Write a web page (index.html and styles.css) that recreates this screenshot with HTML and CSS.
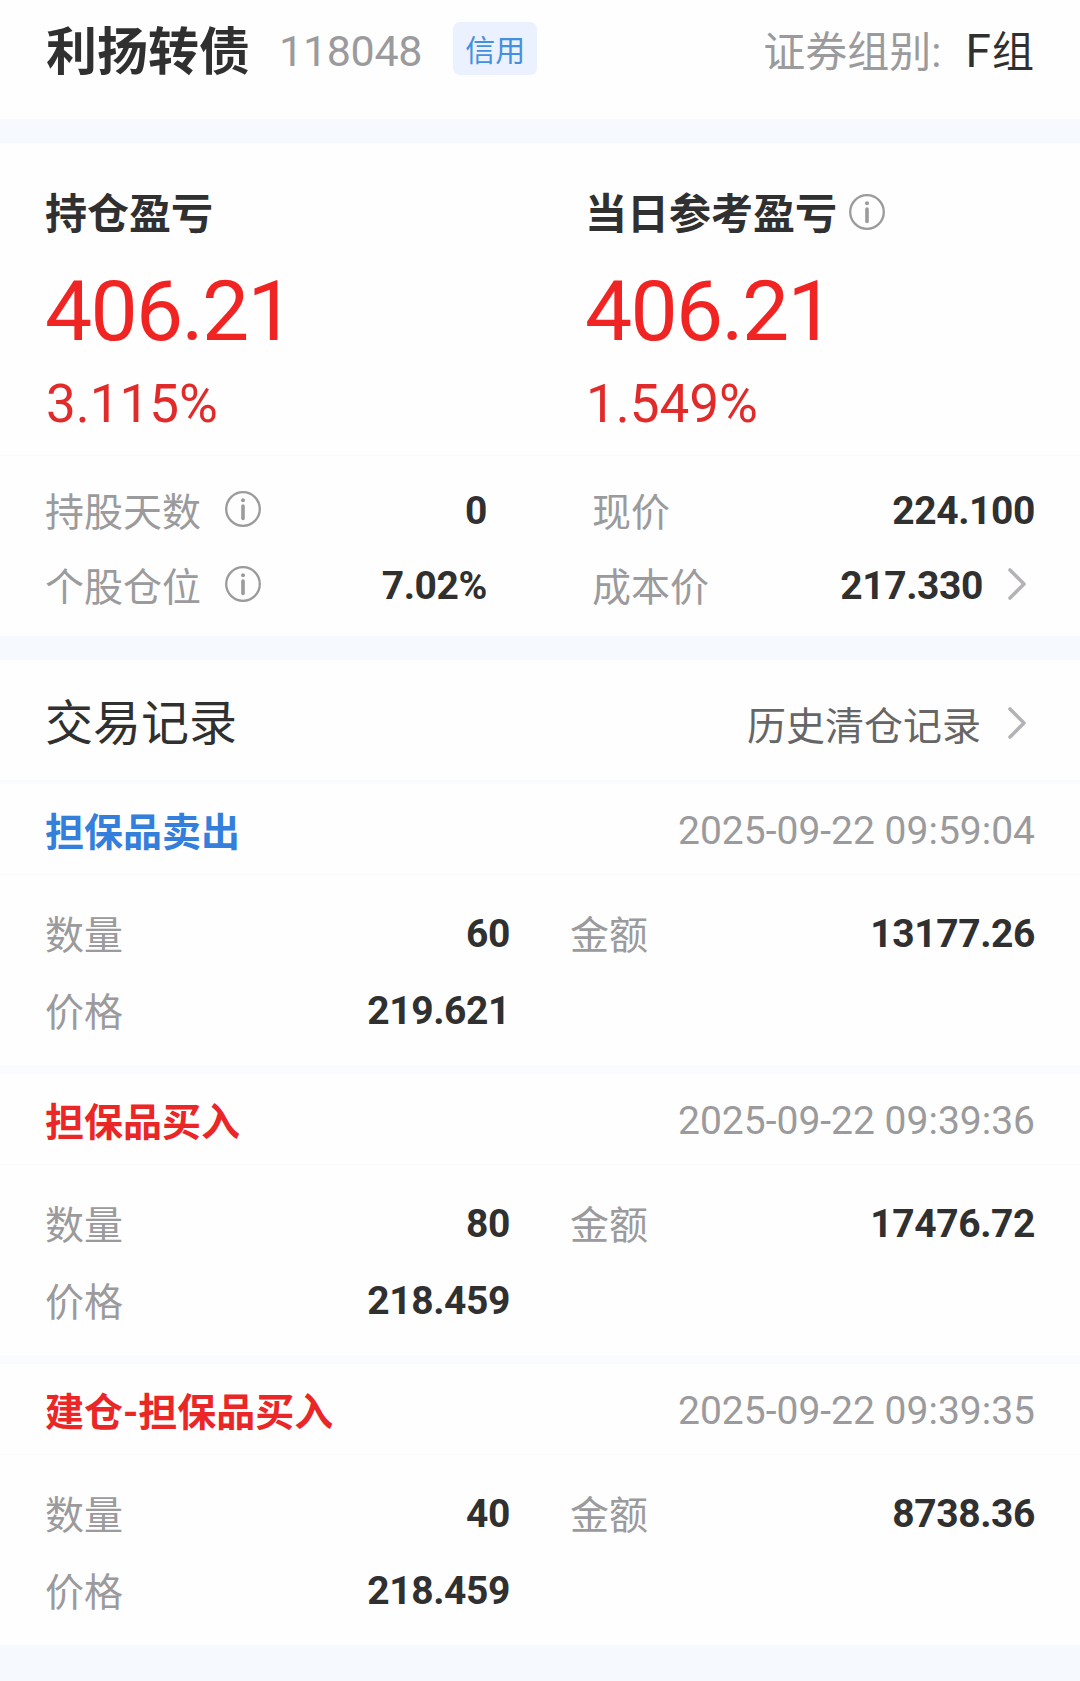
FILE: index.html
```html
<!DOCTYPE html>
<html lang="zh-CN">
<head>
<meta charset="utf-8">
<title>利扬转债 118048</title>
<link rel="stylesheet" href="styles.css">
</head>
<body>
<svg class="sprite" aria-hidden="true">
  <symbol id="info" viewBox="0 0 36 36">
    <circle cx="18" cy="18" r="16.8" fill="none" stroke="currentColor" stroke-width="2.3"/>
    <circle cx="18" cy="9.2" r="2" fill="currentColor"/>
    <path d="M18 15v12.5" fill="none" stroke="currentColor" stroke-width="3.6" stroke-linecap="round"/>
  </symbol>
  <symbol id="chevron" viewBox="0 0 18 32">
    <path d="M2 2l14 14L2 30" fill="none" stroke="currentColor" stroke-width="3.6" stroke-linecap="round" stroke-linejoin="round"/>
  </symbol>
</svg>

<header class="header">
  <h1 class="name">利扬转债</h1>
  <span class="code">118048</span>
  <span class="badge">信用</span>
  <span class="group-label">证券组别:</span>
  <span class="group"><span class="group-letter">F</span>组</span>
</header>

<section class="profit">
  <div class="profit-col">
    <h2 class="profit-title"><span class="profit-name">持仓盈亏</span></h2>
    <div class="amount">406.21</div>
    <div class="percent">3.115%</div>
  </div>
  <div class="profit-col">
    <h2 class="profit-title"><span class="profit-name">当日参考盈亏</span><svg class="info"><use href="#info"/></svg></h2>
    <div class="amount">406.21</div>
    <div class="percent">1.549%</div>
  </div>
</section>

<section class="stats">
  <div class="stat-col">
    <div class="row"><span class="label">持股天数</span><svg class="info"><use href="#info"/></svg><span class="value">0</span></div>
    <div class="row"><span class="label">个股仓位</span><svg class="info"><use href="#info"/></svg><span class="value">7.02%</span></div>
  </div>
  <div class="stat-col">
    <div class="row"><span class="label">现价</span><span class="value">224.100</span></div>
    <div class="row"><span class="label">成本价</span><span class="value">217.330</span><svg class="chevron"><use href="#chevron"/></svg></div>
  </div>
</section>

<main class="records">
  <div class="records-head">
    <h2 class="records-title">交易记录</h2>
    <a class="history">历史清仓记录</a>
    <svg class="chevron"><use href="#chevron"/></svg>
  </div>

  <article class="record">
    <div class="record-head"><h3 class="action sell">担保品卖出</h3><time class="time">2025-09-22 09:59:04</time></div>
    <div class="record-body">
      <div class="row"><span class="label">数量</span><span class="value">60</span></div>
      <div class="row"><span class="label">金额</span><span class="value">13177.26</span></div>
      <div class="row"><span class="label">价格</span><span class="value">219.621</span></div>
    </div>
  </article>

  <article class="record">
    <div class="record-head"><h3 class="action buy">担保品买入</h3><time class="time">2025-09-22 09:39:36</time></div>
    <div class="record-body">
      <div class="row"><span class="label">数量</span><span class="value">80</span></div>
      <div class="row"><span class="label">金额</span><span class="value">17476.72</span></div>
      <div class="row"><span class="label">价格</span><span class="value">218.459</span></div>
    </div>
  </article>

  <article class="record">
    <div class="record-head"><h3 class="action buy">建仓-担保品买入</h3><time class="time">2025-09-22 09:39:35</time></div>
    <div class="record-body">
      <div class="row"><span class="label">数量</span><span class="value">40</span></div>
      <div class="row"><span class="label">金额</span><span class="value">8738.36</span></div>
      <div class="row"><span class="label">价格</span><span class="value">218.459</span></div>
    </div>
  </article>
</main>
</body>
</html>
```
FILE: styles.css
```css
* {
  box-sizing: border-box;
}

body {
  margin: 0;
  min-height: 1681px;
  background: #f6faff;
  color: #303030;
  font-family: Roboto, "Noto Sans CJK SC", sans-serif;
  font-size: 39px;
  line-height: 1.2;
  white-space: nowrap;
}

h1, h2, h3 {
  margin: 0;
}

.sprite {
  display: none;
}

.info {
  flex: none;
  width: 36px;
  height: 36px;
  color: #9b9a9c;
}

.chevron {
  flex: none;
  width: 18px;
  height: 32px;
  margin: 0 9px 6px 25px;
  color: #b4b2b6;
}

/* Header */
.header {
  display: flex;
  align-items: center;
  height: 119px;
  padding: 0 46px 15px;
  background: #fefefe;
  font-size: 42px;
}

.name {
  padding-top: 2px;
  font-size: 51px;
  font-weight: 700;
}

.code {
  margin-left: 29px;
  color: #9b9a9c;
  font-size: 43px;
  letter-spacing: -0.3px;
}

.badge {
  width: 84px;
  height: 53px;
  margin: -7px 0 0 31px;
  border-radius: 7px;
  background: #ebf1fe;
  color: #4490e0;
  font-size: 30px;
  line-height: 57px;
  text-align: center;
}

.group-label {
  margin-left: auto;
  padding-top: 3px;
  color: #9b9a9c;
}

.group {
  margin-left: 24px;
  padding-top: 3px;
}

.group-letter {
  margin-right: 1px;
  font-size: 46px;
  line-height: 1;
}

/* Profit summary */
.profit {
  display: grid;
  grid-template-columns: 1fr 1fr;
  height: 313px;
  margin-top: 24px;
  padding-top: 40px;
  border-bottom: 1px solid #f7faff;
  background: #fefefe;
}

.profit-col {
  padding-left: 46px;
}

.profit-title {
  display: flex;
  align-items: center;
  gap: 12px;
  height: 60px;
  margin-left: -1px;
  padding-bottom: 2px;
  font-size: 42px;
  font-weight: 700;
}

.profit-name {
  padding-top: 6px;
}

.amount {
  margin-top: 27px;
  margin-left: -1px;
  color: #f02423;
  font-size: 84px;
  line-height: 84px;
  letter-spacing: -1.7px;
}

.percent {
  margin-top: 20px;
  color: #e12b2a;
  font-size: 53px;
  line-height: 60px;
}

/* Rows of labels and values */
.row {
  display: flex;
  align-items: center;
}

.label {
  padding-top: 4px;
  color: #9b9a9c;
}

.value {
  margin-left: auto;
  font-weight: 700;
  letter-spacing: -0.4px;
}

.stats {
  display: grid;
  grid-template-columns: 442px 443px;
  justify-content: space-between;
  height: 180px;
  padding: 18px 45px 12px;
  background: #fefefe;
}

.stats .info {
  margin: 0 0 6px 24px;
}

.stats .row {
  height: 75px;
}

/* Trade records */
.records {
  margin-top: 24px;
}

.records-head {
  display: flex;
  align-items: center;
  height: 120px;
  padding: 8px 45px 0;
  background: #fefefe;
}

.records-head .chevron {
  margin-bottom: 3px;
  margin-left: 27px;
}

.records-title {
  font-size: 48px;
  font-weight: 400;
}

.history {
  margin-left: auto;
  padding-top: 7px;
  color: #666;
}

.record {
  height: 290px;
  border-top: 9px solid #f9fbff;
  background: #fefefe;
}

.records-head + .record {
  height: 285px;
  border-top-width: 4px;
}

.record-head {
  display: flex;
  align-items: center;
  justify-content: space-between;
  height: 91px;
  padding: 4px 45px 0;
  border-bottom: 1px solid #fbfbfd;
}

.action {
  padding-top: 4px;
  font-size: 39px;
  font-weight: 700;
}

.sell {
  color: #347fdc;
}

.buy {
  color: #ea2626;
}

.time {
  color: #9b9a9c;
}

.record-body {
  display: grid;
  grid-template-columns: 465px 465px;
  grid-auto-rows: 77px;
  justify-content: space-between;
  padding: 21px 45px 0;
}
```
